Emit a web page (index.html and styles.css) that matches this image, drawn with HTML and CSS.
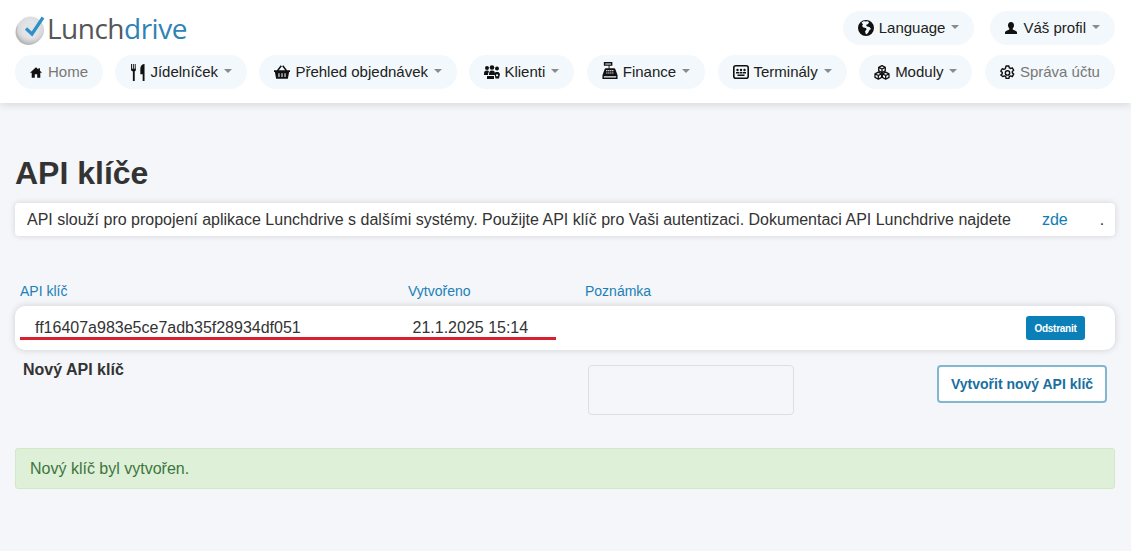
FILE: index.html
```html
<!DOCTYPE html>
<html lang="cs">
<head>
<meta charset="utf-8">
<title>API klíče</title>
<link rel="stylesheet" href="styles.css">
</head>
<body>
<svg class="defs" width="0" height="0" aria-hidden="true">
  <symbol id="i-home" viewBox="0 0 14 12"><path d="M7 0 0 6.2h2V12h3.6V8h2.8v4H12V6.2h2L11.6 4V1h-1.8v1.4z"/></symbol>
  <symbol id="i-food" viewBox="0 0 15 18"><path d="M0 0h1v5h1V0h1v5h1V0h1v3l.3 3.500L4 8v10H2V8L0 6.500z"/><path d="M14.500 0v18h-2v-7H10V5c0-3 2-5 4.500-5z"/></symbol>
  <symbol id="i-basket" viewBox="0 0 18 15"><path d="M0 5.500h3.300L7.500 0l1.400 1L5.400 5.500h7.200L9.100 1l1.400-1 4.200 5.500H18v2h-1L15.600 15H2.400L1 7.500H0zM5 9v4h1.200V9zm3.400 0v4h1.200V9zm3.400 0v4H13V9z" fill-rule="evenodd"/></symbol>
  <symbol id="i-users" viewBox="0 0 16 14"><circle cx="3" cy="3" r="2"/><circle cx="8" cy="2.500" r="2.300"/><circle cx="13" cy="3.500" r="2"/><path d="M0 9c0-3 1-3.500 3-3.500 1 0 1.500.3 2 1C4.500 7.500 4 8 4 10H0z"/><path d="M5 10c0-3.500 1-4.500 3-4.500s3 1 3 3.500v1H5zM3 11h7v3H3z"/><path d="M11.500 7h3L16 9l-1 4.500h-3.500L10.500 9z"/><circle cx="13" cy="10.300" r="1.100" fill="#f2f8fb"/></symbol>
  <symbol id="i-cash" viewBox="0 0 16 18"><path d="M1.500 0h9v4h-3v2.500H12c1 0 1.500.5 1.700 1.300L16 14v4H0v-4l2.300-6.200c.2-.8.700-1.300 1.700-1.300h2.500V4h-5zM3 1.500V2.700h6V1.500zM1.500 15v1.500h13V15z" fill-rule="evenodd"/><path fill="#f2f8fb" d="M4 8.500h1.300v1.200H4zm2.100 0h1.300v1.200H6.100zm2.100 0h1.300v1.200H8.200zm2.100 0h1.300v1.200h-1.300zM4 11h1.300v1.200H4zm2.100 0h1.300v1.200H6.100zm2.100 0h1.300v1.200H8.200zm2.100 0h1.300v1.200h-1.300z"/></symbol>
  <symbol id="i-term" viewBox="0 0 16 14"><rect x=".8" y=".8" width="14.400" height="12.400" rx="2" fill="none" stroke="currentColor" stroke-width="1.600"/><circle cx="4.500" cy="5" r="1.200"/><circle cx="8" cy="5" r="1.200"/><circle cx="11.500" cy="5" r="1.200"/><path d="M3 7h3v1.500H3zM6.500 7h3v1.500h-3zM10 7h3v1.500h-3zM4.500 9.500h7v1.500h-7z"/></symbol>
  <symbol id="i-cubes" viewBox="0 0 16 15"><g fill="none" stroke="currentColor" stroke-width="1.300" stroke-linejoin="round"><path d="M8 .7 11.300 2.400v3.500L8 7.600 4.700 5.900V2.400zM4.700 2.400 8 4l3.300-1.600M8 4v3.600"/><path d="M4.300 7.200 7.600 8.900v3.500L4.300 14.200 1 12.400V8.900zM1 8.900l3.300 1.600 3.300-1.600M4.300 10.500v3.700"/><path d="M11.700 7.200 15 8.900v3.500l-3.300 1.800-3.300-1.800V8.900zM8.400 8.900l3.300 1.600L15 8.900M11.700 10.500v3.700"/></g></symbol>
  <symbol id="i-gear" viewBox="0 0 16 16"><g fill="none" stroke="currentColor"><path stroke-width="1.500" stroke-linejoin="round" d="M6.500 1h3l.4 2 1.300.7 1.900-.7 1.500 2.600-1.500 1.300v1.500l1.500 1.300-1.500 2.600-1.900-.7-1.300.7-.4 2h-3l-.4-2-1.300-.7-1.900.7L.9 10.700l1.500-1.300V7.900L.9 6.600l1.500-2.600 1.900.7L5.600 4z"/><circle cx="8" cy="8.500" r="2.300" stroke-width="1.500"/></g></symbol>
  <symbol id="i-globe" viewBox="0 0 16 16"><path fill-rule="evenodd" d="M8 0a8 8 0 1 1 0 16A8 8 0 0 1 8 0zM3.500 2.500 5 4.500 4 6l1.500 1.500L8 8l.5 1.500L7 11.500l1 3 2-1.500 1.500-3 1.500-1-1.500-2-2.500-.5-1-1.500 2-1 1-1.500L10 1.300 7 1.500 6 1z"/></symbol>
  <symbol id="i-user" viewBox="0 0 12 12"><path d="M6 0c1.900 0 3 1.300 3 3.200 0 1.300-.5 2.500-1.300 3.200v1l3.300 1.600c.7.400 1 .9 1 1.500V12H0v-1.500c0-.6.300-1.100 1-1.500l3.300-1.600v-1C3.500 5.700 3 4.500 3 3.200 3 1.300 4.100 0 6 0z"/></symbol>
</svg>

<header class="site-header">
  <div class="top-row">
    <a class="logo" href="#">
      <svg class="logo-mark" viewBox="0 0 32 32" aria-hidden="true">
        <defs>
          <radialGradient id="disc" cx="50%" cy="40%" r="65%"><stop offset="0" stop-color="#e9ebee"/><stop offset=".7" stop-color="#d8dade"/><stop offset="1" stop-color="#b4b7bb"/></radialGradient>
        </defs>
        <ellipse cx="13.500" cy="19" rx="13" ry="13" fill="#8d8a84" opacity=".6"/>
        <circle cx="15.500" cy="17" r="13.500" fill="url(#disc)"/>
        <circle cx="15.500" cy="17" r="9" fill="#e1e3e7"/>
        <path d="M11 15.500 17 21 28 4.500" fill="none" stroke="#2f8fc9" stroke-width="3.200"/>
      </svg>
      <span class="logo-text">Lunch<span class="logo-accent">drive</span></span>
    </a>
    <nav class="user-nav">
      <a class="pill" href="#"><svg class="ico ico-globe"><use href="#i-globe"/></svg>Language<span class="caret"></span></a>
      <a class="pill" href="#"><svg class="ico ico-user"><use href="#i-user"/></svg>Váš profil<span class="caret"></span></a>
    </nav>
  </div>
  <nav class="main-nav">
    <a class="pill muted" href="#"><svg class="ico ico-home"><use href="#i-home"/></svg>Home</a>
    <a class="pill" href="#"><svg class="ico ico-food"><use href="#i-food"/></svg>Jídelníček<span class="caret"></span></a>
    <a class="pill" href="#"><svg class="ico ico-basket"><use href="#i-basket"/></svg>Přehled objednávek<span class="caret"></span></a>
    <a class="pill" href="#"><svg class="ico ico-users"><use href="#i-users"/></svg>Klienti<span class="caret"></span></a>
    <a class="pill" href="#"><svg class="ico ico-cash"><use href="#i-cash"/></svg>Finance<span class="caret"></span></a>
    <a class="pill" href="#"><svg class="ico ico-term"><use href="#i-term"/></svg>Terminály<span class="caret"></span></a>
    <a class="pill" href="#"><svg class="ico ico-cubes"><use href="#i-cubes"/></svg>Moduly<span class="caret"></span></a>
    <a class="pill muted" href="#"><svg class="ico ico-gear"><use href="#i-gear"/></svg>Správa účtu</a>
  </nav>
</header>

<main class="content">
  <h1 class="page-title">API klíče</h1>
  <p class="info-card">
    <span class="info-text">API slouží pro propojení aplikace Lunchdrive s dalšími systémy. Použijte API klíč pro Vaši autentizaci. Dokumentaci API Lunchdrive najdete</span>
    <a class="info-link" href="#">zde</a>
    <span class="info-dot">.</span>
  </p>

  <div class="table-head">
    <span class="col-key">API klíč</span>
    <span class="col-date">Vytvořeno</span>
    <span class="col-note">Poznámka</span>
  </div>
  <div class="key-row">
    <span class="key-value">ff16407a983e5ce7adb35f28934df051</span>
    <span class="key-date">21.1.2025 15:14</span>
    <button class="btn-remove" type="button">Odstranit</button>
    <span class="redline"></span>
  </div>

  <form class="new-key">
    <strong class="new-label">Nový API klíč</strong>
    <textarea class="note-input" aria-label="Poznámka"></textarea>
    <button class="btn-create" type="button">Vytvořit nový API klíč</button>
  </form>

  <div class="alert">Nový klíč byl vytvořen.</div>
</main>
</body>
</html>
```

FILE: styles.css
```css
* { box-sizing: border-box; }
html, body { height: 100%; }
body {
  margin: 0;
  overflow: hidden;
  background: #f4f6fa;
  color: #333;
  font-family: "Liberation Sans", Arial, sans-serif;
  font-size: 16px;
}
a { text-decoration: none; color: inherit; }
.defs { position: absolute; }

.site-header {
  height: 103px;
  padding: 11px 16px 0 15px;
  background: #fff;
  box-shadow: 0 2px 8px rgba(0, 0, 0, .12);
}
.top-row { display: flex; justify-content: space-between; height: 44px; }
.logo { display: flex; align-items: flex-start; margin-top: 2px; }
.logo-mark { width: 32px; height: 32px; flex: none; }
.logo-text {
  font-family: "Open Sans", sans-serif;
  font-size: 28px;
  font-weight: 500;
  line-height: 31px;
  color: #555659;
  letter-spacing: -.5px;
}
.logo-accent { color: #2f83b4; }
.user-nav { display: flex; gap: 16px; height: 34px; }
.main-nav { display: flex; justify-content: space-between; }

.pill {
  display: flex;
  align-items: center;
  height: 34px;
  padding: 0 15px 2px;
  border-radius: 17px;
  background: #f2f8fb;
  color: #212121;
  font-size: 15px;
  white-space: nowrap;
}
.pill.muted { color: #777; }
.caret {
  width: 0;
  height: 0;
  margin-left: 6px;
  border-left: 4px solid transparent;
  border-right: 4px solid transparent;
  border-top: 4px solid #8a8a8a;
}
.ico { flex: none; margin-top: 2px; margin-right: 4px; fill: #111; color: #111; }
.ico-home { width: 12px; height: 11px; margin-right: 6px; }
.ico-food { width: 14px; height: 17px; margin-left: 1px; margin-right: 5px; }
.ico-basket { width: 16px; height: 14px; margin-right: 5px; }
.ico-users { width: 16px; height: 14px; margin-right: 4px; }
.ico-cash { width: 16px; height: 17px; margin-top: -1px; margin-right: 5px; }
.ico-term { width: 16px; height: 14px; margin-right: 5px; }
.ico-cubes { width: 16px; height: 15px; margin-right: 5px; }
.ico-gear { width: 15px; height: 15px; margin-right: 5px; }
.ico-globe { width: 16px; height: 16px; margin-right: 5px; }
.ico-user { width: 12px; height: 12px; margin-right: 6px; }

.content { padding: 0 16px 0 15px; }
.page-title {
  margin: 0;
  padding-top: 52px;
  font-size: 32px;
  line-height: 37px;
  font-weight: 700;
  color: #333;
}
.info-card {
  display: flex;
  align-items: center;
  height: 33px;
  margin: 11px 0 0;
  padding: 0 0 0 12px;
  background: #fff;
  border-radius: 4px;
  box-shadow: 0 0 6px rgba(0, 0, 0, .15);
  font-size: 16px;
}
.info-text { white-space: nowrap; }
.info-link { margin-left: 31px; color: #0f7cb5; }
.info-dot { margin-left: 32px; }

.table-head {
  display: flex;
  margin-top: 47px;
  padding-left: 5px;
  height: 16px;
  font-size: 14px;
  line-height: 16px;
  color: #1a80b6;
}
.col-key { width: 388px; }
.col-date { width: 177px; }

.key-row {
  position: relative;
  display: flex;
  align-items: center;
  height: 44px;
  margin-top: 7px;
  padding: 0 30px 0 20px;
  background: #fff;
  border-radius: 10px;
  box-shadow: 0 0 7px rgba(0, 0, 0, .16);
  font-size: 16px;
}
.key-value { width: 377.500px; }
.redline {
  position: absolute;
  left: 5px;
  top: 31px;
  width: 536px;
  height: 3px;
  background: #d9202e;
}
.btn-remove {
  margin-left: auto;
  width: 59px;
  height: 24px;
  padding: 0;
  border: 0;
  border-radius: 3px;
  background: #0a7fb8;
  color: #fff;
  font: 700 10px "Liberation Sans", Arial, sans-serif;
  letter-spacing: -.25px;
}

.new-key { display: flex; align-items: flex-start; margin-top: 15px; }
.new-label {
  width: 573px;
  margin-top: -4px;
  padding-left: 8px;
  font-size: 16px;
  line-height: 18px;
  color: #333;
}
.note-input {
  display: block;
  width: 206px;
  height: 50px;
  background: #f4f6fa;
  border: 1px solid #dcdfe6;
  border-radius: 4px;
  resize: none;
}
.btn-create {
  width: 170px;
  height: 38px;
  margin-left: 143px;
  padding: 0;
  border: 2px solid #82b7d2;
  border-radius: 4px;
  background: #fff;
  color: #1a6f9f;
  font: 700 14px "Liberation Sans", Arial, sans-serif;
}

.alert {
  display: flex;
  align-items: center;
  height: 41px;
  margin-top: 33px;
  padding-left: 14px;
  background: #dff0d8;
  border: 1px solid #d3e8c9;
  border-radius: 3px;
  color: #3c763d;
  font-size: 16px;
}
```
